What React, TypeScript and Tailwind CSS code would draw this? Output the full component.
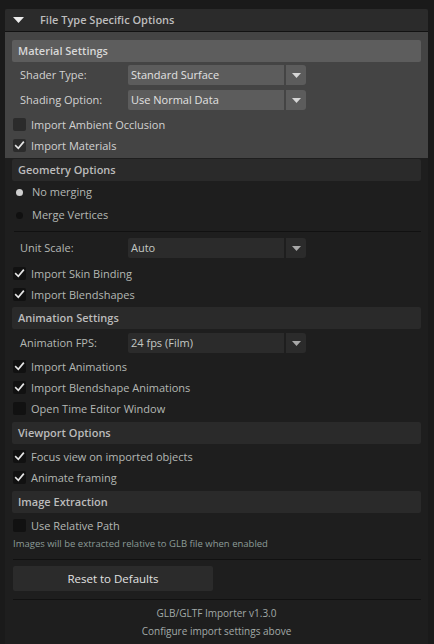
import React from 'react'

const font = { fontFamily: '"Open Sans", "Noto Sans", sans-serif' }

function Check({ checked, dark }: { checked: boolean; dark?: boolean }) {
  return (
    <div
      className={`ml-[1px] flex h-[13px] w-[13px] shrink-0 items-center justify-center rounded-[2px] ${
        dark ? 'bg-[#111111]' : 'bg-[#2b2b2b]'
      }`}
    >
      {checked && (
        <svg width="11" height="11" viewBox="0 0 11 11" fill="none">
          <path d="M1.8 5.8 L4.3 8.3 L9.3 2.3" stroke="#e6e6e6" strokeWidth="1.7" strokeLinecap="square" />
        </svg>
      )}
    </div>
  )
}

function CheckRow({ label, checked, dark, mt }: { label: string; checked: boolean; dark?: boolean; mt: string }) {
  return (
    <div className={`flex h-[13px] items-center ${mt}`}>
      <Check checked={checked} dark={dark} />
      <span className={`ml-[5px] text-[11px] leading-none ${dark ? 'text-[#b4b8b4]' : 'text-[#d2d2d2]'}`}>{label}</span>
    </div>
  )
}

function Arrow({ color }: { color: string }) {
  return (
    <svg width="9" height="5" viewBox="0 0 9 5">
      <path d="M0 0 H9 L4.5 5 Z" fill={color} />
    </svg>
  )
}

function Dropdown({ label, value, dark, mt }: { label: string; value: string; dark?: boolean; mt: string }) {
  const bg = dark ? 'bg-[#2b2b2b]' : 'bg-[#5c5c5c]'
  return (
    <div className={`flex h-[20px] items-center ${mt}`}>
      <span className={`w-[116px] pl-[8px] text-[11px] ${dark ? 'text-[#b4b8b4]' : 'text-[#d2d2d2]'}`}>{label}</span>
      <div className="flex h-[20px] w-[178px] gap-[2px]">
        <div className={`flex flex-1 items-center rounded-l-[2px] pl-[3px] text-[11px] ${bg} ${dark ? 'text-[#c4c8c4]' : 'text-[#e2e2e2]'}`}>
          {value}
        </div>
        <div className={`flex w-[20px] items-center justify-center rounded-r-[3px] ${bg}`}>
          <Arrow color={dark ? '#a8a8a8' : '#d6d6d6'} />
        </div>
      </div>
    </div>
  )
}

function SectionHeader({ title, mt }: { title: string; mt: string }) {
  return (
    <div className={`flex h-[22px] items-center rounded-[2px] bg-[#2a2a2a] pl-[6px] text-[11px] font-semibold text-[#bcbcbc] ${mt}`}>
      {title}
    </div>
  )
}

function Radio({ label, selected }: { label: string; selected: boolean }) {
  return (
    <div className="flex h-[23px] items-center">
      <div className={`ml-[4px] h-[7px] w-[7px] rounded-full ${selected ? 'bg-[#cfcfcf]' : 'bg-[#101010]'}`} />
      <span className="ml-[9px] text-[11px] text-[#b4b8b4]">{label}</span>
    </div>
  )
}

export default function App() {
  return (
    <div className="min-h-screen bg-[#1a1a1a] pt-[9px] pl-[5px]" style={font}>
      <div className="w-[423px] bg-[#1e1e1e] pb-[10px]">
        {/* Collapsible header */}
        <div className="flex h-[23px] items-center rounded-t-[2px] border-b border-[#121212] bg-[#2b2b2b] pl-[8px]">
          <svg width="11" height="6" viewBox="0 0 11 6">
            <path d="M0 0 H11 L5.5 6 Z" fill="#ededed" />
          </svg>
          <span className="ml-[16px] text-[11px] font-semibold text-[#bdbdbd]">File Type Specific Options</span>
        </div>

        {/* Material settings */}
        <div className="bg-[#444444] px-[7px] pt-[8px] pb-[6px]">
          <div className="flex h-[22px] items-center rounded-[2px] bg-[#5d5d5d] pl-[6px] text-[11px] font-semibold text-[#d8d8d8]">
            Material Settings
          </div>
          <Dropdown label="Shader Type:" value="Standard Surface" mt="mt-[3px]" />
          <Dropdown label="Shading Option:" value="Use Normal Data" mt="mt-[5px]" />
          <CheckRow label="Import Ambient Occlusion" checked={false} mt="mt-[8px]" />
          <CheckRow label="Import Materials" checked mt="mt-[8px]" />
        </div>

        <div className="px-[7px]">
          <SectionHeader title="Geometry Options" mt="mt-[1px]" />
          <Radio label="No merging" selected />
          <Radio label="Merge Vertices" selected={false} />
          <div className="ml-[2px] mt-[4px] h-px bg-[#111111]" />

          <Dropdown label="Unit Scale:" value="Auto" dark mt="mt-[6px]" />
          <CheckRow label="Import Skin Binding" checked dark mt="mt-[9px]" />
          <CheckRow label="Import Blendshapes" checked dark mt="mt-[8px]" />

          <SectionHeader title="Animation Settings" mt="mt-[6px]" />
          <Dropdown label="Animation FPS:" value="24 fps (Film)" dark mt="mt-[4px]" />
          <CheckRow label="Import Animations" checked dark mt="mt-[7px]" />
          <CheckRow label="Import Blendshape Animations" checked dark mt="mt-[8px]" />
          <CheckRow label="Open Time Editor Window" checked={false} dark mt="mt-[8px]" />

          <SectionHeader title="Viewport Options" mt="mt-[7px]" />
          <CheckRow label="Focus view on imported objects" checked dark mt="mt-[6px]" />
          <CheckRow label="Animate framing" checked dark mt="mt-[8px]" />

          <SectionHeader title="Image Extraction" mt="mt-[7px]" />
          <CheckRow label="Use Relative Path" checked={false} dark mt="mt-[6px]" />
          <p className="mt-[5px] ml-[1px] text-[9.5px] leading-[14px] text-[#8c9c98]">
            Images will be extracted relative to GLB file when enabled
          </p>
          <div className="ml-[1px] mt-[8px] h-px bg-[#111111]" />

          <button className="ml-[1px] mt-[6px] flex h-[25px] w-[200px] items-center justify-center rounded-[2px] bg-[#2b2b2b] text-[11.5px] text-[#e2e2e2]">
            Reset to Defaults
          </button>
          <div className="ml-[1px] mt-[8px] h-px bg-[#111111]" />

          <p className="mt-[5px] text-center text-[10px] leading-[16px] text-[#a2aaa8]">GLB/GLTF Importer v1.3.0</p>
          <p className="mt-[2px] text-center text-[10px] leading-[16px] text-[#a2aaa8]">Configure import settings above</p>
        </div>
      </div>
    </div>
  )
}
